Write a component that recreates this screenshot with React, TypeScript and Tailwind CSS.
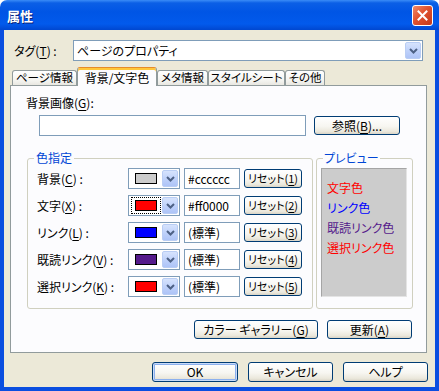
import type { ReactNode } from "react"

const font =
  "font-['Noto_Sans_CJK_JP','Noto_Sans_CJK_SC',sans-serif] [font-feature-settings:'palt'] whitespace-nowrap"

function Chevron() {
  return (
    <svg width="9" height="6" viewBox="0 0 9 6">
      <path d="M1 1 L4.5 4.5 L8 1" fill="none" stroke="#4d6185" strokeWidth="2" />
    </svg>
  )
}

function DropButton({ className = "" }: { className?: string }) {
  return (
    <div
      className={`flex items-center justify-center rounded-[2px] border border-[#b9cdf4] bg-[linear-gradient(to_bottom,#d6e3fd,#bccffa_60%,#aec4f7)] ${className}`}
    >
      <Chevron />
    </div>
  )
}

function XpButton({
  children,
  className = "",
  isDefault = false,
}: {
  children: ReactNode
  className?: string
  isDefault?: boolean
}) {
  return (
    <div
      className={`flex items-center justify-center rounded-[3px] border border-[#003c74] bg-[linear-gradient(to_bottom,#ffffff_0%,#f7f6f1_55%,#ebe8dc_85%,#d9d4c6_100%)] leading-none text-black ${
        isDefault ? "shadow-[inset_0_0_0_1px_#c9dbf8,inset_0_0_0_2px_#8cb0ee]" : ""
      } ${className}`}
    >
      {children}
    </div>
  )
}

function Mn({ children }: { children: ReactNode }) {
  return <span className="underline underline-offset-[2px]">{children}</span>
}

const rows = [
  { label: "背景", key: "C", swatch: "bg-[#cccccc]", value: "#cccccc", n: "1", focus: false },
  { label: "文字", key: "X", swatch: "bg-[#ff0000]", value: "#ff0000", n: "2", focus: true },
  { label: "リンク", key: "L", swatch: "bg-[#0000ff]", value: "(標準)", n: "3", focus: false },
  { label: "既読リンク", key: "V", swatch: "bg-[#551a8b]", value: "(標準)", n: "4", focus: false },
  { label: "選択リンク", key: "K", swatch: "bg-[#ff0000]", value: "(標準)", n: "5", focus: false },
]

const tabs = [
  { name: "ページ情報", w: "w-[65px]" },
  { name: "背景/文字色", w: "w-[80px]", active: true },
  { name: "メタ情報", w: "w-[51px]" },
  { name: "スタイルシート", w: "w-[77px]" },
  { name: "その他", w: "w-[40px]" },
]

export default function App() {
  return (
    <div className={`${font} flex h-[391px] w-[439px] flex-col text-[12px] text-black`}>
      {/* タイトルバー */}
      <div className="flex h-[30px] shrink-0 items-center justify-between rounded-t-[7px] bg-[linear-gradient(to_bottom,#3a8cf7_0px,#0b5fe6_3px,#0055e5_12px,#025aec_24px,#0047d0_30px)] pl-[7px] pr-[6px]">
        <span className="text-[13px] font-bold leading-none text-white [text-shadow:1px_1px_0_#0a1f75]">
          属性
        </span>
        <div className="flex h-[21px] w-[21px] items-center justify-center rounded-[3px] border border-white bg-[linear-gradient(135deg,#f08a6a,#e0522f_45%,#c2381c)]">
          <svg width="11" height="11" viewBox="0 0 11 11">
            <path d="M1.5 1.5 L9.5 9.5 M9.5 1.5 L1.5 9.5" stroke="white" strokeWidth="2" strokeLinecap="square" />
          </svg>
        </div>
      </div>

      {/* 枠とクライアント領域 */}
      <div className="flex flex-1 bg-[#0a4ee0] px-[4px] pb-[4px]">
        <div className="flex flex-1 flex-col bg-[#ece9d8]">
          {/* タグ */}
          <div className="mt-[10px] flex h-[21px] items-center">
            <span className="w-[69px] pl-[10px] leading-none">
              タグ(<Mn>T</Mn>) :
            </span>
            <div className="flex h-[21px] w-[350px] items-center justify-between border border-[#7f9db9] bg-white pl-[3px] pr-[1px]">
              <span className="leading-none">ページのプロパティ</span>
              <DropButton className="h-[17px] w-[16px]" />
            </div>
          </div>

          {/* タブ */}
          <div className="ml-[8px] mt-[6px] flex h-[18px] items-end">
            {tabs.map((t) =>
              t.active ? (
                <div
                  key={t.name}
                  className={`${t.w} relative z-10 -mb-px flex h-[19px] items-center justify-center rounded-t-[3px] border border-b-0 border-[#919b9c] border-t-[#e68b2c] bg-[#fcfcfe] pt-[1px] leading-none shadow-[inset_0_2px_0_#ffc73c]`}
                >
                  {t.name}
                </div>
              ) : (
                <div
                  key={t.name}
                  className={`${t.w} flex h-[15px] items-center justify-center rounded-t-[3px] border border-b-0 border-[#919b9c] bg-[linear-gradient(to_bottom,#ffffff,#f3f3ef_70%,#e8e7e1)] text-[11.5px] leading-none`}
                >
                  {t.name}
                </div>
              )
            )}
          </div>

          {/* タブパネル */}
          <div className="ml-[6px] flex h-[268px] w-[417px] flex-col border border-[#919b9c] bg-[#fcfcfe]">
            <span className="ml-[15px] mt-[10px] leading-[14px]">
              背景画像(<Mn>G</Mn>):
            </span>
            <div className="ml-[28px] mt-[5px] flex items-center">
              <div className="h-[21px] w-[267px] border border-[#7f9db9] bg-white" />
              <XpButton className="ml-[8px] h-[19px] w-[86px]">
                参照(<Mn>B</Mn>)...
              </XpButton>
            </div>

            <div className="ml-[16px] mt-[22px] flex">
              {/* 色指定 */}
              <div className="flex h-[151px] w-[286px] flex-col rounded-[3px] border border-[#d0d0bf]">
                <span className="-mt-[8px] ml-[6px] w-fit bg-[#fcfcfe] px-[2px] leading-[14px] text-[#0046d5]">
                  色指定
                </span>
                <div className="mt-[3px] flex flex-col gap-[6px]">
                  {rows.map((r) => (
                    <div key={r.key} className="flex h-[21px] items-center">
                      <span className="w-[100px] pl-[9px] leading-none">
                        {r.label}(<Mn>{r.key}</Mn>) :
                      </span>
                      <div className="flex h-[21px] w-[52px] items-center border border-[#7f9db9] bg-white">
                        <div className="flex flex-1 items-center justify-center">
                          <div
                            className={`flex h-[15px] w-[28px] items-center justify-center ${
                              r.focus ? "outline outline-1 outline-dotted outline-black" : ""
                            }`}
                          >
                            <div className={`h-[11px] w-[22px] border border-black ${r.swatch}`} />
                          </div>
                        </div>
                        <DropButton className="mr-[1px] h-[17px] w-[16px]" />
                      </div>
                      <div className="ml-[4px] flex h-[21px] w-[56px] items-center border border-[#7f9db9] bg-white pl-[3px] leading-none">
                        {r.value}
                      </div>
                      <XpButton className="ml-[4px] h-[19px] w-[58px] text-[11px]">
                        リセット(<Mn>{r.n}</Mn>)
                      </XpButton>
                    </div>
                  ))}
                </div>
              </div>

              {/* プレビュー */}
              <div className="ml-[3px] flex h-[151px] w-[97px] flex-col rounded-[3px] border border-[#d0d0bf]">
                <span className="-mt-[8px] ml-[6px] w-fit bg-[#fcfcfe] px-[1px] leading-[14px] text-[#0046d5]">
                  プレビュー
                </span>
                <div className="ml-[4px] mt-[3px] flex h-[129px] w-[86px] flex-col gap-[6px] border border-[#a5a5a5] border-b-[#e4e4e4] border-r-[#e4e4e4] bg-[#cccccc] pl-[5px] pt-[12px] leading-[14px]">
                  <span className="text-[#ff0000]">文字色</span>
                  <span className="text-[#0000ff]">リンク色</span>
                  <span className="text-[#551a8b]">既読リンク色</span>
                  <span className="text-[#ff0000]">選択リンク色</span>
                </div>
              </div>
            </div>

            <div className="mr-[14px] mt-[11px] flex justify-end gap-[9px]">
              <XpButton className="h-[19px] w-[124px]">
                カラー ギャラリー(<Mn>G</Mn>)
              </XpButton>
              <XpButton className="h-[19px] w-[85px]">
                更新(<Mn>A</Mn>)
              </XpButton>
            </div>
          </div>

          {/* ダイアログボタン */}
          <div className="mr-[7px] mt-[9px] flex justify-end gap-[10px]">
            <XpButton isDefault className="h-[20px] w-[86px]">
              OK
            </XpButton>
            <XpButton className="h-[20px] w-[85px]">キャンセル</XpButton>
            <XpButton className="h-[20px] w-[85px]">ヘルプ</XpButton>
          </div>
        </div>
      </div>
    </div>
  )
}
